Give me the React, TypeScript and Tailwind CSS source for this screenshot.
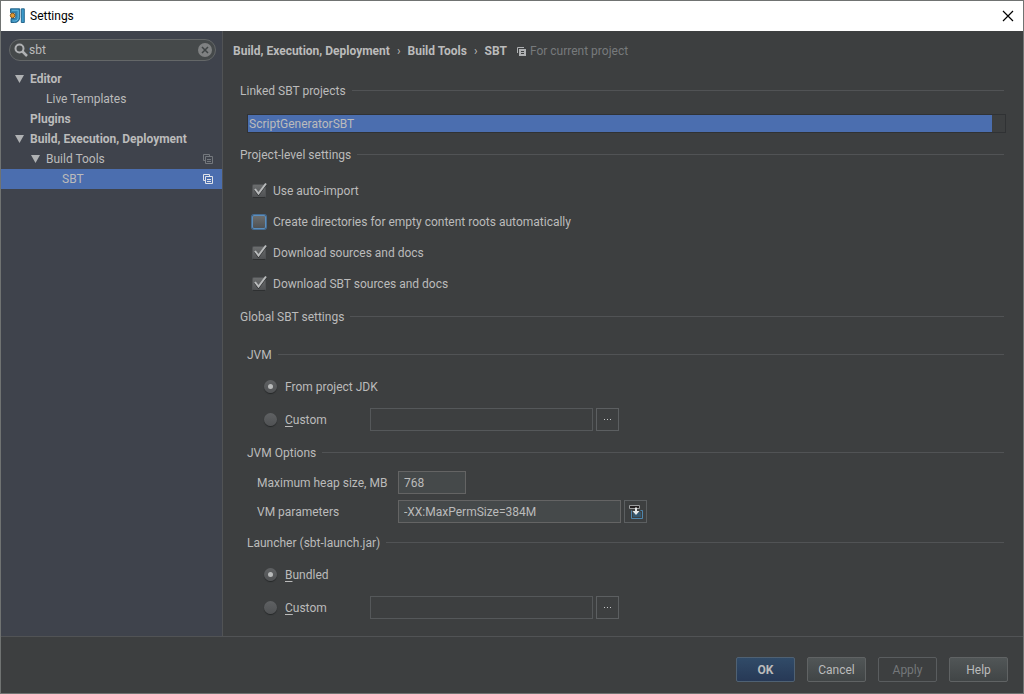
import { useState } from "react";
import type { ReactNode } from "react";
import clsx from "clsx";

type TreeNode = { id: string; label: string; bold?: boolean; arrow?: boolean; copy?: boolean; indent: string }

const tree: TreeNode[] = [
    { id: "editor", label: "Editor", bold: true, arrow: true, indent: "pl-3.5" },
    { id: "live", label: "Live Templates", indent: "pl-[45px]" },
    { id: "plugins", label: "Plugins", bold: true, indent: "pl-[29px]" },
    { id: "build", label: "Build, Execution, Deployment", bold: true, arrow: true, indent: "pl-3.5" },
    { id: "tools", label: "Build Tools", arrow: true, copy: true, indent: "pl-[30px]" },
    { id: "sbt", label: "SBT", copy: true, indent: "pl-[61px]" },
]

const fieldStyle = "h-[23px] min-w-0 border border-[#646464] bg-[#45494a] px-[5px] text-[#bbbbbb] outline-none"
const emptyFieldStyle = "h-[23px] w-[223px] min-w-0 border border-[#55585a] bg-transparent px-[5px] outline-none"

function CopyIcon({ className }: { className?: string }) {
    return (
        <svg width="10" height="10" viewBox="0 0 10 10" fill="none" stroke="currentColor" className={className} aria-hidden="true">
            <path d="M2.5 6.5H.5v-6h6v2" />
            <path d="M2.5 2.5h7v7h-7zM4 5.5h4M4 7.5h4" />
        </svg>
    )
}

function Logo() {
    return (
        <svg width="16" height="16" viewBox="0 0 16 16" aria-hidden="true">
            <path d="M1.500.8h9.200v8.400c0 3.500-2 5.300-5 5.300H2v-4h3c1.300 0 1.700-.7 1.700-2V4.800H1.500z" fill="#3488b5" stroke="#1a5c84" strokeWidth=".9" />
            <path d="M3 2.300h6.200v7c0 2.400-1.400 3.700-3.700 3.700H3.500" fill="none" stroke="#6fc0e6" strokeWidth=".8" />
            <path d="M12.300.8h3v13.700h-3z" fill="#3c9aca" stroke="#1a5c84" strokeWidth=".9" />
            <circle cx="3.600" cy="7.500" r="2.300" fill="#e09a32" stroke="#7c4b12" strokeWidth=".9" />
        </svg>
    )
}

function Heading({ children, className }: { children: ReactNode; className?: string }) {
    return (
        <div className={clsx("flex h-5 items-center gap-1.5", className)}>
            <h2>{children}</h2>
            <div className="mb-0.5 h-px flex-1 bg-[#515355]" />
        </div>
    )
}

function Check({ label, checked, focused }: { label: string; checked?: boolean; focused?: boolean }) {
    return (
        <label className="flex h-[31px] items-center gap-[7px]">
            <span className="relative flex size-3.5">
                <input
                    type="checkbox"
                    defaultChecked={checked}
                    className={clsx(
                        "peer size-3.5 appearance-none rounded-xs bg-linear-to-b from-[#6b6d6e] to-[#505254] outline-none",
                        focused ? "border border-[#5b8ebd] ring-1 ring-[#466d94]" : "border border-[#515355] border-b-[#2e3031]"
                    )}
                />
                <svg viewBox="0 0 16 16" className="pointer-events-none absolute -top-0.5 left-0 hidden size-4 peer-checked:block" fill="none" aria-hidden="true">
                    <path d="M3 8l3.500 4.500L14 2.500" stroke="#2b2d2e" strokeWidth="2" />
                    <path d="M3 7l3.500 4.500L14 1.500" stroke="#b9bbbc" strokeWidth="2" />
                </svg>
            </span>
            {label}
        </label>
    )
}

function Radio({ name, checked, children }: { name: string; checked?: boolean; children: ReactNode }) {
    return (
        <label className="flex w-[106px] items-center gap-2 whitespace-nowrap">
            <input
                type="radio"
                name={name}
                defaultChecked={checked}
                className="flex size-[13px] shrink-0 appearance-none items-center justify-center rounded-full bg-linear-to-b from-[#5f6163] to-[#505254] shadow-[0_1px_1px_#242627] before:hidden before:size-[5px] before:rounded-full before:bg-[#b8baba] checked:before:block"
            />
            <span>{children}</span>
        </label>
    )
}

function CustomRow({ name, label }: { name: string; label: string }) {
    return (
        <div className="flex h-[33px] items-center">
            <Radio name={name}><u className="underline-offset-2">C</u>ustom</Radio>
            <input aria-label={label} className={emptyFieldStyle} />
            <button aria-label={"Browse " + label} className="ml-[3px] flex h-[23px] w-[23px] items-center justify-center gap-0.5 border border-[#5c5f61]">
                <span className="size-px bg-[#c5c7c8]" />
                <span className="size-px bg-[#c5c7c8]" />
                <span className="size-px bg-[#c5c7c8]" />
            </button>
        </div>
    )
}

function Sidebar() {
    const [selected, setSelected] = useState("sbt")
    const [query, setQuery] = useState("sbt")
    return (
        <aside className="w-[222px] shrink-0 border-r border-[#515355] bg-[#3f434c] pt-2">
            <div className="mr-1.5 ml-2 flex h-[22px] items-center rounded-full border border-[#646768] bg-[#45494a] pr-[3px] pl-1">
                <svg width="14" height="14" viewBox="0 0 14 14" fill="none" stroke="#afb1b3" strokeWidth="2" className="shrink-0" aria-hidden="true">
                    <circle cx="5.5" cy="5.5" r="4" />
                    <path d="M8.5 8.5l4.5 4.5" strokeWidth="2.5" />
                </svg>
                <input aria-label="Search settings" value={query} onChange={(e) => setQuery(e.target.value)} className="ml-px min-w-0 flex-1 bg-transparent outline-none" />
                <button aria-label="Clear search" onClick={() => setQuery("")}>
                    <svg width="14" height="14" viewBox="0 0 14 14" aria-hidden="true">
                        <circle cx="7" cy="7" r="7" fill="#7f8182" />
                        <path d="M4 4l6 6M10 4l-6 6" stroke="#3f4445" strokeWidth="1.5" />
                    </svg>
                </button>
            </div>
            <nav aria-label="Settings tree" className="mt-2 flex flex-col">
                {tree.map((node) => (
                    <button
                        key={node.id}
                        onClick={() => setSelected(node.id)}
                        className={clsx("flex h-5 items-center pr-[9px] text-left whitespace-nowrap", node.indent, node.bold && "font-bold", selected === node.id && "bg-[#4b6eaf]")}
                    >
                        {node.arrow && (
                            <svg width="10" height="8" viewBox="0 0 10 8" className="mr-[5px] shrink-0" aria-hidden="true">
                                <path d="M0 0h9L4.500 8z" fill="#afb1b3" />
                            </svg>
                        )}
                        <span className="flex-1">{node.label}</span>
                        {node.copy && <CopyIcon className={selected === node.id ? "text-[#dfe3ea]" : "text-[#74787d]"} />}
                    </button>
                ))}
            </nav>
        </aside>
    )
}

function Content() {
    return (
        <main className="min-w-0 flex-1 pr-[19px] pb-3 pl-[17px]">
            <div className="-ml-[7px] flex h-10 items-center whitespace-nowrap">
                <h1 className="flex gap-[7px] font-bold">
                    <span>Build, Execution, Deployment</span>
                    <span className="font-normal">›</span>
                    <span>Build Tools</span>
                    <span className="font-normal">›</span>
                    <span>SBT</span>
                </h1>
                <svg width="9" height="9" viewBox="0 0 9 9" className="mr-1 ml-2.5" aria-hidden="true">
                    <path d="M.5 6V.5H7" fill="none" stroke="#afb1b3" />
                    <path d="M2 2h7v7H2z" fill="#afb1b3" />
                    <path d="M4 4.500h3M4 6.500h3" stroke="#3d3f40" />
                </svg>
                <span className="text-[#777a7c]">For current project</span>
            </div>

            <Heading className="mt-2.5">Linked SBT projects</Heading>
            <ul className="mt-[13px] -mr-0.5 ml-[7px] h-[19px] border border-[#303234] pr-[13px]">
                <li className="flex h-full items-center bg-[#4b6eaf] pl-px">ScriptGeneratorSBT</li>
            </ul>

            <Heading className="mt-3">Project-level settings</Heading>
            <div className="mt-2.5 ml-3">
                <Check label="Use auto-import" checked />
                <Check label="Create directories for empty content roots automatically" focused />
                <Check label="Download sources and docs" checked />
                <Check label="Download SBT sources and docs" checked />
            </div>

            <Heading className="mt-2">Global SBT settings</Heading>
            <div className="ml-[7px]">
                <Heading className="mt-[18px]">JVM</Heading>
                <div className="mt-[5px] ml-[17px]">
                    <div className="flex h-[33px] items-center"><Radio name="jvm" checked>From project JDK</Radio></div>
                    <CustomRow name="jvm" label="custom JVM" />
                </div>

                <Heading className="mt-[7px]">JVM Options</Heading>
                <div className="mt-[5px] ml-2.5">
                    <div className="flex h-[29px] items-center">
                        <label htmlFor="heap" className="w-[141px]">Maximum heap size, MB</label>
                        <input id="heap" defaultValue="768" className={clsx(fieldStyle, "w-[68px]")} />
                    </div>
                    <div className="flex h-[29px] items-center">
                        <label htmlFor="params" className="w-[141px]">VM parameters</label>
                        <input id="params" defaultValue="-XX:MaxPermSize=384M" className={clsx(fieldStyle, "w-[223px]")} />
                        <button aria-label="Expand VM parameters" className="ml-[3px] flex h-[23px] w-[23px] items-center justify-center border border-[#5c5f61]">
                            <svg width="14" height="14" viewBox="0 0 14 14" fill="none" aria-hidden="true">
                                <path d="M2.500 5.500v8h11v-8h-2" stroke="#4f86ad" />
                                <path d="M4 7h8v5H4z" fill="#35576e" />
                                <path d="M.5.5h10v3H.5z" fill="#231f20" stroke="#9b9d9e" />
                                <path d="M6 2.500h2V6h2.500L7 10 3.500 6H6z" fill="#e6e8e8" />
                            </svg>
                        </button>
                    </div>
                </div>

                <Heading className="mt-[7px]">Launcher (sbt-launch.jar)</Heading>
                <div className="mt-[5px] ml-[17px]">
                    <div className="flex h-[33px] items-center"><Radio name="launcher" checked><u className="underline-offset-2">B</u>undled</Radio></div>
                    <CustomRow name="launcher" label="custom launcher" />
                </div>
            </div>
        </main>
    )
}

const buttonStyle = "h-[25px] w-[59px] rounded-xs border"

export default function App() {
    return (
        <div className="flex min-h-screen flex-col border border-[#707372] bg-[#3d3f40] font-[Roboto,'Open_Sans',sans-serif] text-xs text-[#bbbbbb]">
            <header className="flex h-[30px] items-center bg-white pr-[9px] pl-2 text-black">
                <Logo />
                <span className="ml-[5px] flex-1">Settings</span>
                <button aria-label="Close">
                    <svg width="12" height="12" viewBox="0 0 12 12" stroke="#000" strokeWidth="1.200" aria-hidden="true">
                        <path d="M1 1l10 10M11 1L1 11" />
                    </svg>
                </button>
            </header>
            <div className="flex flex-1">
                <Sidebar />
                <Content />
            </div>
            <footer className="flex h-[57px] justify-end gap-3 border-t border-[#515355] pt-5 pr-[15px]">
                <button className={clsx(buttonStyle, "border-[#4f6173] bg-linear-to-b from-[#314b68] to-[#273956] font-bold")}>OK</button>
                <button className={clsx(buttonStyle, "border-[#606364] bg-linear-to-b from-[#515657] to-[#414546]")}>Cancel</button>
                <button disabled className={clsx(buttonStyle, "border-[#5a5d5f] text-[#74777a]")}>Apply</button>
                <button className={clsx(buttonStyle, "border-[#606364] bg-linear-to-b from-[#515657] to-[#414546]")}>Help</button>
            </footer>
        </div>
    )
}
